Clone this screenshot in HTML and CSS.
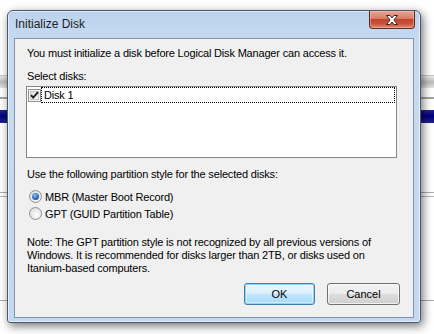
FILE: index.html
```html
<!DOCTYPE html>
<html lang="en">

<head>
   <meta charset="UTF-8">
   <title>Initialize Disk</title>
   <link rel="stylesheet" href="styles.css">
</head>

<body>
   <div class="desktop">
      <div class="window">
         <div class="titlebar">
            <span class="title">Initialize Disk</span>
            <button class="close" aria-label="Close">
               <svg width="16" height="12" viewBox="0 0 16 12">
                  <path d="M2.5 1.5h3.5l2 2.4 2-2.4h3.5l-3.6 4.5 3.6 4.5h-3.5l-2-2.4-2 2.4h-3.5l3.6-4.5z" fill="#fff" stroke="#3b2420" stroke-width="1" stroke-linejoin="round"/>
               </svg>
            </button>
         </div>
         <div class="client">
            <p class="intro">You must initialize a disk before Logical Disk Manager can access it.</p>
            <p class="caption">Select disks:</p>
            <div class="listbox">
               <div class="item">
                  <svg class="check" width="13" height="13" viewBox="0 0 13 13">
                     <defs>
                        <linearGradient id="cb" x1="0" y1="0" x2="1" y2="1">
                           <stop offset="0" stop-color="#dcdcdc"/>
                           <stop offset="1" stop-color="#fbfbfb"/>
                        </linearGradient>
                     </defs>
                     <rect x="0.5" y="0.5" width="12" height="12" fill="#f4f4f4" stroke="#8e8f8f"/>
                     <rect x="2.5" y="2.5" width="8" height="8" fill="url(#cb)" stroke="#c6c6c6"/>
                     <path d="M3 6.2l2.2 2.4 4.8-5.4" fill="none" stroke="#1a1a1a" stroke-width="1.8"/>
                  </svg>
                  <span class="item-text">Disk 1</span>
               </div>
            </div>
            <p class="caption caption-style">Use the following partition style for the selected disks:</p>
            <label class="radio radio-first"><span class="dot dot-on"></span>MBR (Master Boot Record)</label>
            <label class="radio"><span class="dot"></span>GPT (GUID Partition Table)</label>
            <p class="note">Note: The GPT partition style is not recognized by all previous versions of Windows. It is recommended for disks larger than 2TB, or disks used on Itanium-based computers.</p>
            <div class="buttons">
               <button class="btn btn-default">OK</button>
               <button class="btn">Cancel</button>
            </div>
         </div>
      </div>
   </div>
</body>

</html>
```

FILE: styles.css
```css
html,
body {
   margin: 0;
   padding: 0;
}

body {
   font-family: 'Liberation Sans', Arial, sans-serif;
   font-size: 11px;
   letter-spacing: -0.18px;
   color: #000;
}

.desktop {
   width: 434px;
   height: 334px;
   overflow: hidden;
   box-sizing: border-box;
   padding: 10px 0 0 7px;
   background: linear-gradient(to bottom,
         #fff 0, #fff 75px,
         #c4c4c4 75px, #c4c4c4 76px,
         #ececec 76px, #bcbcbc 82px, #e2e2e2 88px,
         #fff 88px, #fff 97px,
         #a4a4a4 97px, #a4a4a4 99px,
         #fff 99px, #fff 110px,
         #23238c 110px, #000080 116px, #23238c 123px,
         #fff 123px, #fff 192px,
         #acacac 192px, #acacac 193px,
         #fff 193px, #fff 196px,
         #b4b4b4 196px, #b4b4b4 197px,
         #fff 197px, #fff 300px,
         #a8a8a8 300px, #a8a8a8 301px,
         #fff 301px);
}

.window {
   width: 414px;
   height: 313px;
   box-sizing: border-box;
   border: 1px solid #4a5869;
   border-radius: 6px 6px 3px 3px;
   background: linear-gradient(to bottom, #bcd2ee 0, #c6daf2 30px, #c3d8f1 100%);
   box-shadow: 2px 3px 10px rgba(0, 0, 0, 0.55), inset 0 0 0 1px rgba(255, 255, 255, 0.55);
}

.titlebar {
   height: 27px;
   display: flex;
   align-items: flex-start;
}

.title {
   font-size: 12px;
   letter-spacing: 0;
   line-height: 14px;
   color: #1e1e1e;
   padding: 6px 0 0 7px;
}

.close {
   margin-left: auto;
   margin-right: 5px;
   width: 46px;
   height: 18px;
   padding: 0;
   border: 1px solid #5b2b22;
   border-top: 0;
   border-radius: 0 0 4px 4px;
   background: linear-gradient(to bottom, #e9a796 0, #d97a64 45%, #c2432c 50%, #c9533b 75%, #df8c73 100%);
   box-shadow: inset 0 0 0 1px rgba(255, 200, 190, 0.45);
   display: flex;
   align-items: center;
   justify-content: center;
}

.client {
   margin: 0 6px;
   height: 280px;
   box-sizing: border-box;
   border: 1px solid #8594a8;
   background-color: #f0f0f0;
   padding: 8px 13px 0 12px;
   display: flex;
   flex-direction: column;
}

p {
   margin: 0;
   line-height: 13px;
}

.caption {
   margin-top: 10px;
}

.listbox {
   margin: 3px 0 0 -1px;
   width: 371px;
   height: 72px;
   box-sizing: border-box;
   border: 1px solid #828790;
   background-color: #fff;
}

.item {
   height: 16px;
   display: flex;
   align-items: center;
}

.check {
   margin-left: 1px;
   flex: none;
}

.item-text {
   flex: 1;
   height: 16px;
   line-height: 14px;
   box-sizing: border-box;
   border: 1px dotted #000;
   padding-left: 2px;
   margin-right: 1px;
}

.caption-style {
   margin-top: 10px;
}

.radio {
   display: flex;
   align-items: center;
   height: 17px;
   margin-left: 2px;
}

.radio-first {
   margin-top: 7px;
}

.dot {
   width: 13px;
   height: 13px;
   box-sizing: border-box;
   border-radius: 50%;
   border: 1px solid #8e8f8f;
   background: radial-gradient(circle at 60% 65%, #fdfdfd 0, #e2e2e2 70%);
   margin-right: 3px;
   display: flex;
   align-items: center;
   justify-content: center;
}

.dot-on::after {
   content: "";
   width: 7px;
   height: 7px;
   border-radius: 50%;
   background: radial-gradient(circle at 40% 35%, #8ac4f0 0, #2a6bbf 55%, #174c94 100%);
}

.note {
   margin-top: 14px;
}

.buttons {
   margin-top: auto;
   margin-bottom: 12px;
   display: flex;
   justify-content: flex-end;
   gap: 12px;
}

.btn {
   width: 73px;
   height: 22px;
   padding: 0;
   font-family: inherit;
   font-size: 11px;
   color: #000;
   border: 1px solid #707070;
   border-radius: 3px;
   background: linear-gradient(to bottom, #f2f2f2 0, #ebebeb 50%, #dddddd 50%, #cfcfcf 100%);
   box-shadow: inset 0 0 0 1px rgba(255, 255, 255, 0.7);
}

.btn-default {
   width: 71px;
   border-color: #3c7fb1;
   background: linear-gradient(to bottom, #eaf6fd 0, #d9f0fc 50%, #bee6fd 50%, #a7d9f5 100%);
   box-shadow: inset 0 0 0 1px #8ed4f8, inset 0 0 0 2px rgba(255, 255, 255, 0.5);
}
```
